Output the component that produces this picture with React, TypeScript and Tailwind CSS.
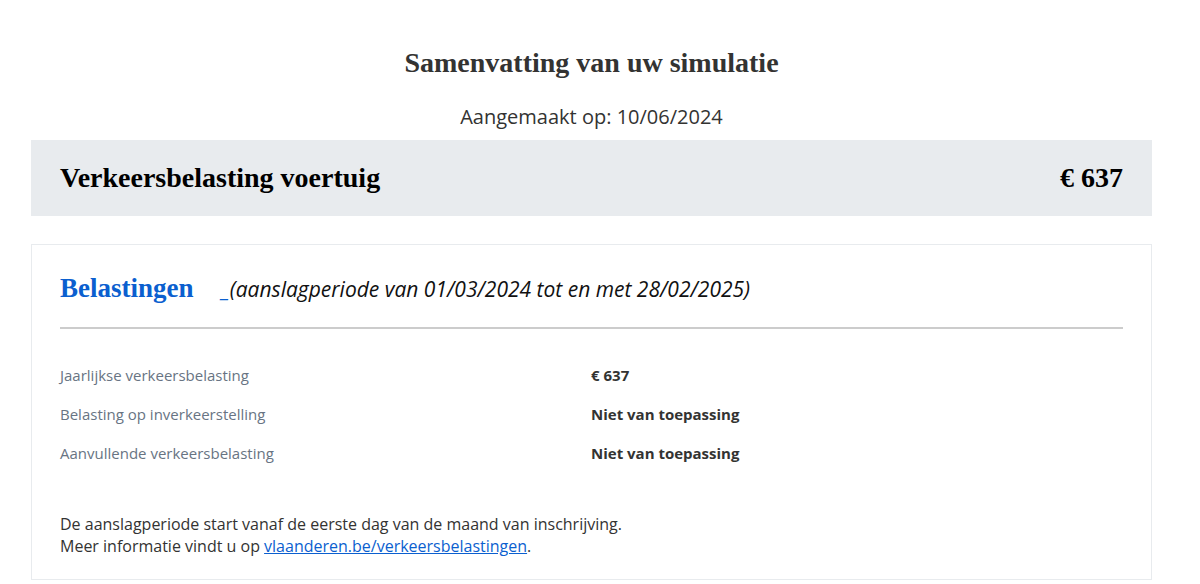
const serif = "font-['Liberation_Serif',serif]";
const sans = "font-['Open_Sans','Noto_Sans',sans-serif]";

const rows = [
  { label: "Jaarlijkse verkeersbelasting", value: "€ 637" },
  { label: "Belasting op inverkeerstelling", value: "Niet van toepassing" },
  { label: "Aanvullende verkeersbelasting", value: "Niet van toepassing" },
];

export default function App() {
  return (
    <div className={`min-h-[584px] bg-white pl-[31px] pr-[48px] pt-[46px] text-[#333332] ${sans}`}>
      <h1 className={`text-center text-[28px] font-bold leading-[34px] ${serif}`}>
        Samenvatting van uw simulatie
      </h1>
      <p className="mt-[25px] text-center text-[20px] leading-[24px]">Aangemaakt op: 10/06/2024</p>

      <div className="mt-[11px] flex h-[76px] items-center justify-between bg-[#e8ebee] px-[29px]">
        <h2 className={`text-[28px] font-bold text-black ${serif}`}>Verkeersbelasting voertuig</h2>
        <span className={`text-[28px] font-bold text-black ${serif}`}>€ 637</span>
      </div>

      <section className="mt-[28px] border border-[#e8ebee] px-[28px] pb-[22px] pt-[25px]">
        <div className="flex items-baseline border-b-2 border-[#cccccc] pb-[21px]">
          <h3 className={`text-[27px] font-bold leading-[36px] text-[#0b5fcf] ${serif}`}>Belastingen</h3>
          <span className="ml-[28px] text-[21px] italic text-[#111111]">
            <span className="text-[#0b5fcf]">_</span>
            (aanslagperiode van 01/03/2024 tot en met 28/02/2025)
          </span>
        </div>

        <dl className="mt-[34px] flex flex-col gap-[15px]">
          {rows.map((r) => (
            <div key={r.label} className="flex items-center text-[15px] leading-[24px]">
              <dt className="w-[531px] text-[#687483]">{r.label}</dt>
              <dd className="font-bold text-[#333332]">{r.value}</dd>
            </div>
          ))}
        </dl>

        <p className="mt-[48px] text-[16px] leading-[22px]">
          De aanslagperiode start vanaf de eerste dag van de maand van inschrijving.
          <br />
          Meer informatie vindt u op{" "}
          <a href="#" className="text-[#0b5fcf] underline">
            vlaanderen.be/verkeersbelastingen
          </a>
          .
        </p>
      </section>
    </div>
  );
}
